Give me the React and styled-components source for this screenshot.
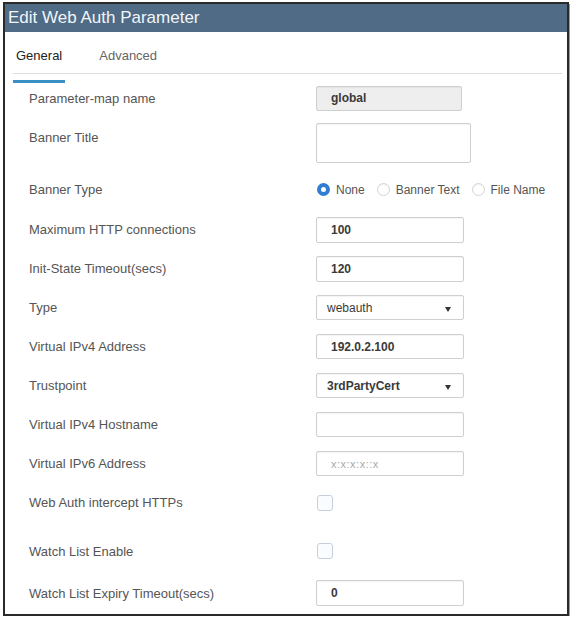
import styled, { createGlobalStyle } from "styled-components";

const GlobalStyle = createGlobalStyle`
  body {
    margin: 0;
    background: #fff;
    font-family: "Liberation Sans", Arial, sans-serif;
  }
`;

const Dialog = styled.div`
  margin: 2px 0 0 3px;
  width: 562px;
  border: 2px solid #2a2a2a;
  box-shadow: 1px 2px 0 #9a9a9a;
  background: #fff;
  padding-bottom: 8px;
`;

const TitleBar = styled.div`
  height: 28px;
  background: #4f6b86;
  color: #f2f5f8;
  font-size: 17px;
  line-height: 28px;
  padding-left: 3px;
`;

const Tabs = styled.div`
  display: flex;
  gap: 31px;
  margin: 0 5px 0 8px;
  padding: 16px 0 0 0;
  height: 25px;
  border-bottom: 1px solid #dcdcdc;
`;

const Tab = styled.div`
  position: relative;
  font-size: 13px;
  color: ${(p) => (p.$active ? "#222" : "#666")};
  padding: 0 3px;
  &::after {
    content: "";
    display: ${(p) => (p.$active ? "block" : "none")};
    position: absolute;
    left: 0;
    right: 0;
    bottom: -10px;
    height: 3px;
    background: #3a8fc4;
  }
`;

const Form = styled.div`
  padding: 5px 0 0 24px;
`;

const Row = styled.div`
  display: grid;
  grid-template-columns: 287px 1fr;
  align-items: ${(p) => (p.$top ? "start" : "center")};
  height: ${(p) => p.$h || 39}px;
  padding-top: ${(p) => (p.$top ? 6 : 0)}px;
  box-sizing: border-box;
`;

const Label = styled.div`
  font-size: 13px;
  color: #555;
  margin-top: ${(p) => p.$offset || 0}px;
`;

const Input = styled.div`
  width: ${(p) => p.$w || 148}px;
  height: ${(p) => p.$ht || 26}px;
  box-sizing: border-box;
  border: 1px solid #cfcfcf;
  border-radius: 2px;
  background: ${(p) => (p.$disabled ? "#eeeeee" : "#fff")};
  box-shadow: inset 0 1px 1px rgba(0, 0, 0, 0.05);
  padding-left: 14px;
  display: flex;
  align-items: center;
  font-size: 12px;
  font-weight: bold;
  color: #3a3a3a;
`;

const Placeholder = styled.span`
  font-weight: normal;
  color: #aaa;
  font-size: 11px;
  letter-spacing: 0.5px;
`;

const Select = styled(Input)`
  padding: 0 12px 0 10px;
  justify-content: space-between;
  font-weight: ${(p) => (p.$bold ? "bold" : "normal")};
  &::after {
    content: "";
    border-left: 3.5px solid transparent;
    border-right: 3.5px solid transparent;
    border-top: 5px solid #333;
    margin-top: 3px;
  }
`;

const Radios = styled.div`
  display: flex;
  align-items: center;
  gap: 12px;
  padding-left: 1px;
`;

const RadioItem = styled.label`
  display: flex;
  align-items: center;
  gap: 6px;
  font-size: 12px;
  color: #555;
`;

const Radio = styled.span`
  width: 13px;
  height: 13px;
  box-sizing: border-box;
  border-radius: 50%;
  border: ${(p) => (p.$on ? "4px solid #2f7ed3" : "1px solid #d4d4d4")};
  background: #fff;
  box-shadow: ${(p) => (p.$on ? "none" : "inset 0 1px 1px rgba(0,0,0,0.06)")};
`;

const Checkbox = styled.span`
  width: 16px;
  height: 16px;
  margin-left: 1px;
  box-sizing: border-box;
  border: 1px solid #c7cfdc;
  border-radius: 3px;
  background: #fbfcff;
`;

export default function App() {
  return (
    <>
      <GlobalStyle />
      <Dialog>
        <TitleBar>Edit Web Auth Parameter</TitleBar>
        <Tabs>
          <Tab $active>General</Tab>
          <Tab>Advanced</Tab>
        </Tabs>
        <Form>
          <Row $h={38}>
            <Label>Parameter-map name</Label>
            <Input $disabled $w={146} $ht={25}>global</Input>
          </Row>
          <Row $h={52} $top>
            <Label $offset={7}>Banner Title</Label>
            <Input $w={155} $ht={40} />
          </Row>
          <Row $h={41}>
            <Label>Banner Type</Label>
            <Radios>
              <RadioItem><Radio $on />None</RadioItem>
              <RadioItem><Radio />Banner Text</RadioItem>
              <RadioItem><Radio />File Name</RadioItem>
            </Radios>
          </Row>
          <Row>
            <Label>Maximum HTTP connections</Label>
            <Input>100</Input>
          </Row>
          <Row>
            <Label>Init-State Timeout(secs)</Label>
            <Input>120</Input>
          </Row>
          <Row>
            <Label>Type</Label>
            <Select $ht={25}>webauth</Select>
          </Row>
          <Row>
            <Label>Virtual IPv4 Address</Label>
            <Input $ht={25}>192.0.2.100</Input>
          </Row>
          <Row>
            <Label>Trustpoint</Label>
            <Select $bold $ht={25}>3rdPartyCert</Select>
          </Row>
          <Row>
            <Label>Virtual IPv4 Hostname</Label>
            <Input $ht={25} />
          </Row>
          <Row>
            <Label>Virtual IPv6 Address</Label>
            <Input $ht={25}>
              <Placeholder>x:x:x:x::x</Placeholder>
            </Input>
          </Row>
          <Row>
            <Label>Web Auth intercept HTTPs</Label>
            <Checkbox />
          </Row>
          <Row $h={58}>
            <Label>Watch List Enable</Label>
            <Checkbox />
          </Row>
          <Row $h={26}>
            <Label>Watch List Expiry Timeout(secs)</Label>
            <Input>0</Input>
          </Row>
        </Form>
      </Dialog>
    </>
  );
}
